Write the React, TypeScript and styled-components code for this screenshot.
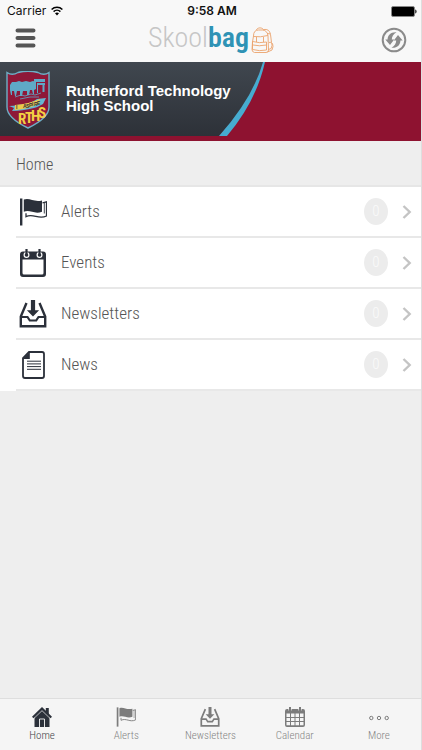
import React from "react";
import styled, { createGlobalStyle } from "styled-components";

const GlobalStyle = createGlobalStyle`
  *, *::before, *::after { box-sizing: border-box; }
  body { margin: 0; background: #eeeeee; }
  button { font: inherit; color: inherit; background: none; border: 0; padding: 0; cursor: pointer; }
  svg { display: block; flex: none; }
`;

const condensed = `"Roboto Condensed", "Liberation Sans Narrow", Roboto, sans-serif`;

const Screen = styled.div`
  min-height: 100vh;
  display: flex;
  flex-direction: column;
  background: #eeeeee;
  border-right: 1px solid #dedede;
  font-family: ${condensed};
  font-weight: 300;
  color: #555;
`;

const StatusBar = styled.div`
  display: grid;
  grid-template-columns: 1fr auto 1fr;
  align-items: center;
  height: 22px;
  padding: 0 4px 0 7px;
  background: #f8f8f8;
  color: #111;
  font: 400 12px/22px Inter, sans-serif;
`;

const Carrier = styled.div`
  display: flex;
  align-items: center;
  gap: 5px;
`;

const Clock = styled.time`
  font-weight: 600;
`;

const BatterySlot = styled.div`
  justify-self: end;
`;

const TopBar = styled.header`
  display: grid;
  grid-template-columns: 1fr auto 1fr;
  align-items: start;
  height: 40px;
  padding: 0 14px 0 15px;
  background: #f8f8f8;
`;

const IconButton = styled.button<{ $end?: boolean }>`
  justify-self: ${(p) => (p.$end ? "end" : "start")};
  padding-top: 5px;
`;

const Logo = styled.div`
  display: flex;
  align-items: center;
  color: #c6c6c6;
  font-size: 28px;
  line-height: 32px;
  b {
    color: #2f93b5;
    font-weight: 600;
  }
  svg { margin: 4px 0 0 2px; }
`;

const Banner = styled.section`
  position: relative;
  display: flex;
  align-items: flex-start;
  gap: 16px;
  height: 79px;
  padding: 9px 6px;
  overflow: hidden;
  background: #8e1230;
`;

const BannerArt = styled.svg`
  position: absolute;
  inset: 0 auto auto 0;
`;

const Crest = styled.svg`
  position: relative;
`;

const SchoolName = styled.h1`
  position: relative;
  margin: 12px 0 0;
  color: #fff;
  font: 700 15px/15px "Liberation Sans", Arial, sans-serif;
`;

const SectionTitle = styled.h2`
  height: 46px;
  margin: 0;
  padding: 2px 16px 0;
  border-bottom: 2px solid #e6e6e6;
  font-size: 16px;
  font-weight: 300;
  line-height: 44px;
`;

const Menu = styled.ul`
  margin: 0;
  padding: 0 0 0 16px;
  list-style: none;
  background: #fff;
`;

const MenuItem = styled.li`
  border-bottom: 2px solid #e8e8e8;
`;

const MenuButton = styled.button`
  display: flex;
  align-items: center;
  width: 100%;
  height: 49px;
  padding: 0 9px 0 3px;
  text-align: left;
  svg { color: #2b303a; }
`;

const MenuLabel = styled.span`
  flex: 1;
  padding: 0 0 2px 14px;
  font-size: 17px;
  line-height: 20px;
`;

const Count = styled.span`
  width: 24px;
  height: 27px;
  margin-right: 14px;
  border-radius: 50%;
  background: #ececec;
  color: #fafafa;
  font-size: 15px;
  line-height: 27px;
  text-align: center;
`;

const Filler = styled.main`
  flex: 1;
`;

const TabBar = styled.nav`
  display: grid;
  grid-template-columns: repeat(5, 1fr);
  height: 52px;
  border-top: 1px solid #dedede;
  background: #f5f5f5;
`;

const Tab = styled.button<{ $active?: boolean }>`
  display: flex;
  flex-direction: column;
  align-items: center;
  padding-top: 8px;
  gap: 2px;
  color: ${(p) => (p.$active ? "#3f4247" : "#858585")};
  font-size: 11px;
  line-height: 14px;
  svg { color: ${(p) => (p.$active ? "#2b303a" : "#7c7c7c")}; }
`;

type IconProps = { size: number };

const FlagIcon = ({ size }: IconProps) => (
  <svg width={size} height={size} viewBox="0 0 28 28" aria-hidden="true">
    <path d="M1 .5h2.400v27H1z" fill="currentColor" />
    <path d="M4.800 1.600c6-2.200 10 3 18.200.8v11.400c-8 2.800-12-2.600-18.200 0z" fill="currentColor" />
    <path d="M23.500 4.800l4-1V18c-8 4-13-3-20.500.6v-3.400" fill="none" stroke="currentColor" strokeWidth="1.300" />
    <path d="M25.300 4.500V15.500" fill="none" stroke="currentColor" strokeWidth=".9" />
  </svg>
);

const EventIcon = ({ size }: IconProps) => (
  <svg width={size} height={size} viewBox="0 0 28 28" aria-hidden="true">
    <path fillRule="evenodd" d="M4 2.500h20q3 0 3 3V25q0 3-3 3H4q-3 0-3-3V5.500q0-3 3-3zM3.500 10.500v13.500q0 1.500 1.500 1.500h18q1.500 0 1.500-1.500V10.500z" fill="currentColor" />
    <circle cx="7.500" cy="6" r="2.400" fill="none" stroke="#fff" strokeWidth="1.200" />
    <circle cx="20.500" cy="6" r="2.400" fill="none" stroke="#fff" strokeWidth="1.200" />
    <path d="M7.500 0v6M20.500 0v6" stroke="currentColor" strokeWidth="2.200" />
  </svg>
);

const InboxIcon = ({ size }: IconProps) => (
  <svg width={size} height={size} viewBox="0 0 28 28" aria-hidden="true">
    <path d="M7.500 3L1.800 16.500v9.800h24.400v-9.800L20.500 3" fill="none" stroke="currentColor" strokeWidth="2.400" />
    <path d="M2 17h6.500l2.300 3.500h6.400l2.300-3.500H26" fill="none" stroke="currentColor" strokeWidth="2.200" />
    <path d="M11.900 0h4.200v10.200h4L14 16.500l-6.100-6.300h4z" fill="currentColor" />
  </svg>
);

const PageIcon = ({ size }: IconProps) => (
  <svg width={size} height={size} viewBox="0 0 28 28" aria-hidden="true">
    <path d="M10 1h13q2 0 2 2v22q0 2-2 2H6q-2 0-2-2V7z" fill="none" stroke="currentColor" strokeWidth="1.800" />
    <path d="M10.800 1v7H3.400z" fill="currentColor" />
    <path d="M8 10.200h14M8 12.900h14M8 15.600h14M8 18.300h14" stroke="currentColor" strokeWidth="1" />
  </svg>
);

const HomeIcon = ({ size }: IconProps) => (
  <svg width={size} height={size} viewBox="0 0 20 20" aria-hidden="true">
    <path d="M13.800 1h3v6h-3z" fill="currentColor" />
    <path d="M2.500 10l7.500-7.300 7.500 7.300V20h-15z" fill="currentColor" />
    <path d="M.7 10.500L10 1.500l9.300 9" fill="none" stroke="currentColor" strokeWidth="2" />
    <path d="M2 11.400L10 3.800l8 7.600" fill="none" stroke="#f5f5f5" strokeWidth=".6" />
    <path d="M7.500 20v-8h5v8" fill="none" stroke="#f5f5f5" strokeWidth=".9" />
  </svg>
);

const CalendarIcon = ({ size }: IconProps) => (
  <svg width={size} height={size} viewBox="0 0 20 20" aria-hidden="true">
    <path fillRule="evenodd" d="M2 2h16q2 0 2 2v14q0 2-2 2H2q-2 0-2-2V4q0-2 2-2zM1.500 6.500v3.400h3.500V6.500zM6 6.500v3.400h3.500V6.500zM10.500 6.500v3.400h3.500V6.500zM15 6.500v3.400h3.500V6.500zM1.500 10.900v3.200h3.500v-3.200zM6 10.900v3.200h3.500v-3.200zM10.500 10.900v3.200h3.500v-3.200zM15 10.900v3.200h3.500v-3.200zM1.500 15.100v3.200h3.500v-3.200zM6 15.100v3.200h3.500v-3.200zM10.500 15.100v3.200h3.500v-3.200zM15 15.100v3.200h3.500v-3.200z" fill="currentColor" />
    <path d="M5 0v3.500M15 0v3.500" stroke="#f5f5f5" strokeWidth="3.200" />
    <path d="M5 0v4M15 0v4" stroke="currentColor" strokeWidth="2" />
  </svg>
);

const MoreIcon = ({ size }: IconProps) => (
  <svg width={size} height={size} viewBox="0 0 20 20" aria-hidden="true">
    <g fill="none" stroke="currentColor" strokeWidth="1">
      <circle cx="2.300" cy="11" r="1.700" />
      <circle cx="10" cy="11" r="1.700" />
      <circle cx="17.700" cy="11" r="1.700" />
    </g>
  </svg>
);

const Chevron = () => (
  <svg width="10" height="14" viewBox="0 0 10 14" aria-hidden="true">
    <path d="M1.500 1l6.200 6-6.200 6" fill="none" stroke="#c4c4c4" strokeWidth="2.400" />
  </svg>
);

const WifiIcon = () => (
  <svg width="12" height="10" viewBox="0 0 12 10" aria-hidden="true">
    <path d="M.6 3.500a7.700 7.700 0 0 1 10.800 0M2.600 5.600a4.900 4.900 0 0 1 6.800 0" fill="none" stroke="#000" strokeWidth="1.500" />
    <path d="M6 9.500L4 7.300a3 3 0 0 1 4 0z" />
  </svg>
);

const BatteryIcon = () => (
  <svg width="26" height="11" viewBox="0 0 26 11" aria-label="Battery full">
    <rect x=".5" y=".5" width="23" height="10" rx="1.500" fill="#000" stroke="#888" />
    <path d="M24.300 3.500q1.200 0 1.200 2t-1.200 2z" />
  </svg>
);

const BackpackIcon = () => (
  <svg width="23" height="27" viewBox="0 0 23 27" fill="none" stroke="#eba36c" strokeWidth=".9" aria-hidden="true">
    <path d="M5.500 3C6 .2 12 .2 12.500 3M2.500 9q0-6 5-6h4q5 .5 5.500 6l.5 14q0 2.500-2.500 2.500H3.500Q1 25 1 22.500L1.500 15z" />
    <path d="M2.500 9.500q7 1 14.300-1M1.500 14.500q7 2 14 .5v8q-7 1.500-14-.5zM2 18q6 1.500 13.500 0M5.500 10v5M12.500 10v5" />
    <path d="M12.500 2.500q6-1 7 5l1 8q1.500 1 1.500 4l-1 3.500-4.500 2M18 15.500q3-1 3 3t-3.500 4M16 6.500l3.500.5" />
  </svg>
);

const RefreshIcon = () => (
  <svg width="26" height="26" viewBox="0 0 26 26" aria-hidden="true">
    <circle cx="13" cy="13" r="11.300" fill="none" stroke="#8b8b8b" strokeWidth="2" />
    <path d="M15.500 5.200C9.500 4.800 6.600 8.300 6.600 12.500H4.300l4.700 5.500 4.200-5.500h-2.400c0-2.800 1.500-5.300 4.700-7.300z" fill="#8b8b8b" />
    <path d="M10.500 20.800c6 .4 8.900-3.100 8.900-7.300h2.300L17 8l-4.200 5.500h2.400c0 2.800-1.500 5.300-4.700 7.300z" fill="#8b8b8b" />
  </svg>
);

const SchoolCrest = () => (
  <Crest width="44" height="58" viewBox="0 0 44 58" role="img" aria-label="Rutherford Technology High School crest">
    <path d="M1 1.500q5 3.500 11 0Q22-1 32 1.500q6 3.500 11 0V36q0 11-21 21Q1 47 1 36z" fill="#8e1838" stroke="#6dafc6" strokeWidth="1.400" />
    <g fill="#5fa9c6">
      <path d="M4 14l2-3 4 0 3-1 3 1 4-1 4 1 3-1 3 1 0 7-2 1 0 4h-1l-1-4-2 0-1 5h-2l0-4-4 0-1 5h-2l0-5-3 0-1 5h-1l-1-5-2 0 0 4H5l-1-5z" />
      <path d="M28 8h11v3H28zM31 12h8v2h-8zM36.500 14h2v7h-2zM31 14h1v8h-1z" />
    </g>
    <path d="M9 26l6-2 4 1 6-2 4 1 6-2M14 28l10-2 9 0" fill="none" stroke="#5fa9c6" strokeWidth=".8" />
    <path d="M3 35q5 0 8-1 14-1 20-6l9-1-3 6q-5 3-9 4-12 3-22 3l2-3z" fill="#67b6d2" />
    <path d="M9 34q14-1 25-6l-1 5Q22 38 9 39z" fill="#ecc94b" />
    <text x="10 13 17 20 23 26 28 31" y="38 38 37 37 36 35 35 34" fontFamily="Liberation Sans" fontSize="5" fontWeight="700" fill="#29303b">I ASPIRE</text>
    <text x="12 19 25 32" y="53 52 50 47" fontFamily="Roboto Condensed" fontSize="15" fontWeight="700" fill="#f2cf43">RTHS</text>
  </Crest>
);

const menu = [
  { label: "Alerts", Icon: FlagIcon, count: 0 },
  { label: "Events", Icon: EventIcon, count: 0 },
  { label: "Newsletters", Icon: InboxIcon, count: 0 },
  { label: "News", Icon: PageIcon, count: 0 },
];

const tabs = [
  { label: "Home", Icon: HomeIcon },
  { label: "Alerts", Icon: FlagIcon },
  { label: "Newsletters", Icon: InboxIcon },
  { label: "Calendar", Icon: CalendarIcon },
  { label: "More", Icon: MoreIcon },
];

export default function App() {
  return (
    <Screen>
      <GlobalStyle />
      <StatusBar>
        <Carrier>Carrier <WifiIcon /></Carrier>
        <Clock>9:58 AM</Clock>
        <BatterySlot><BatteryIcon /></BatterySlot>
      </StatusBar>
      <TopBar>
        <IconButton aria-label="Open menu">
          <svg width="21" height="22" viewBox="0 0 21 22" aria-hidden="true">
            <path d="M2.500 3.500h16M2.500 11h16M2.500 18.500h16" stroke="#555" strokeWidth="4" strokeLinecap="round" />
          </svg>
        </IconButton>
        <Logo><span>Skool<b>bag</b></span><BackpackIcon /></Logo>
        <IconButton $end aria-label="Refresh"><RefreshIcon /></IconButton>
      </TopBar>
      <Banner>
        <BannerArt width="266" height="74" viewBox="0 0 266 74" aria-hidden="true">
          <defs>
            <linearGradient id="slate" x1="0" y1="0" x2="0" y2="1">
              <stop offset="0" stopColor="#40474f" />
              <stop offset="1" stopColor="#2d3138" />
            </linearGradient>
          </defs>
          <path d="M0 0H263Q253 38 219 74H0z" fill="url(#slate)" />
          <path d="M263 0h2Q256 40 227 74h-8Q253 36 263 0z" fill="#46acd0" />
        </BannerArt>
        <SchoolCrest />
        <SchoolName>Rutherford Technology<br />High School</SchoolName>
      </Banner>
      <SectionTitle>Home</SectionTitle>
      <Menu>
        {menu.map(({ label, Icon, count }) => (
          <MenuItem key={label}>
            <MenuButton>
              <Icon size={28} />
              <MenuLabel>{label}</MenuLabel>
              <Count>{count}</Count>
              <Chevron />
            </MenuButton>
          </MenuItem>
        ))}
      </Menu>
      <Filler />
      <TabBar>
        {tabs.map(({ label, Icon }, i) => (
          <Tab key={label} $active={i === 0} aria-current={i === 0 ? "page" : undefined}>
            <Icon size={20} />
            {label}
          </Tab>
        ))}
      </TabBar>
    </Screen>
  );
}
